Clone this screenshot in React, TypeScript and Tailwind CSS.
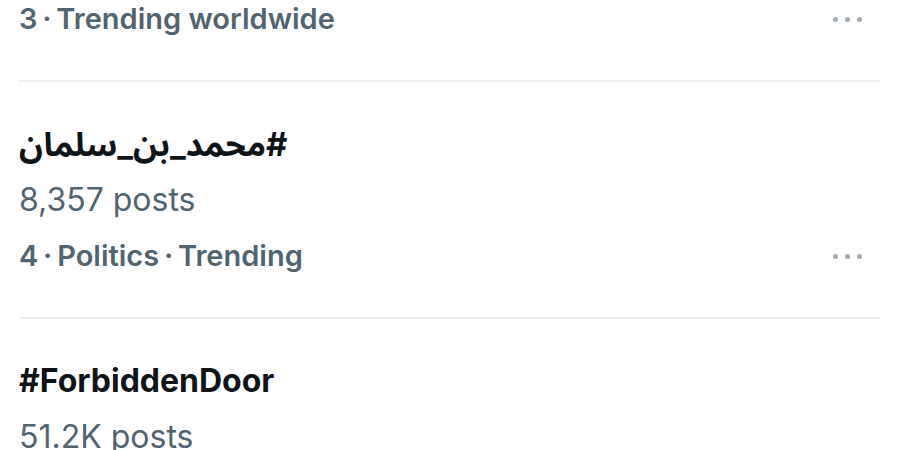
import React from 'react';

type Trend = {
  title?: string;
  rtl?: boolean;
  posts?: string;
  meta?: string;
};

const trends: Trend[] = [
  { meta: '3\u2009·\u2009Trending worldwide' },
  { title: '#محمد_بن_سلمان', rtl: true, posts: '8,357 posts', meta: '4\u2009·\u2009Politics\u2009·\u2009Trending' },
  { title: '#ForbiddenDoor', posts: '51.2K posts' },
];

const font = { fontFamily: 'Inter, "Noto Sans Arabic", "DejaVu Sans", sans-serif' };

const Dots: React.FC = () => (
  <div className="flex items-center gap-[7px] pr-[18px]">
    <span className="w-[5px] h-[5px] rounded-full bg-[#a2aab2]" />
    <span className="w-[5px] h-[5px] rounded-full bg-[#a2aab2]" />
    <span className="w-[5px] h-[5px] rounded-full bg-[#a2aab2]" />
  </div>
);

const TrendItem: React.FC<{ trend: Trend; first?: boolean }> = ({ trend, first }) => (
  <div className={first ? 'pb-[33px]' : 'pt-[34px] pb-[33px]'}>
    {trend.title && (
      <div
        dir={trend.rtl ? 'rtl' : undefined}
        className={`text-left leading-[56px] font-bold text-[#0f1419] ${trend.rtl ? 'text-[33px]' : 'text-[32px]'}`}
      >
        {trend.title}
      </div>
    )}
    {trend.posts && (
      <div className="text-[32px] leading-[56px] text-[#536471]">{trend.posts}</div>
    )}
    {trend.meta && (
      <div className="flex items-center justify-between h-[56px]">
        <span className="text-[29px] leading-[56px] font-semibold text-[#536471]">{trend.meta}</span>
        <Dots />
      </div>
    )}
  </div>
);

export default function App() {
  return (
    <div className="w-[900px] h-[450px] overflow-hidden bg-white" style={font}>
      <div className="-mt-[9px] pl-[19px] pr-[20px]">
        {trends.map((t, i) => (
          <React.Fragment key={i}>
            <TrendItem trend={t} first={i === 0} />
            {i < trends.length - 1 && <div className="h-[2px] bg-[#eceff1]" />}
          </React.Fragment>
        ))}
      </div>
    </div>
  );
}
